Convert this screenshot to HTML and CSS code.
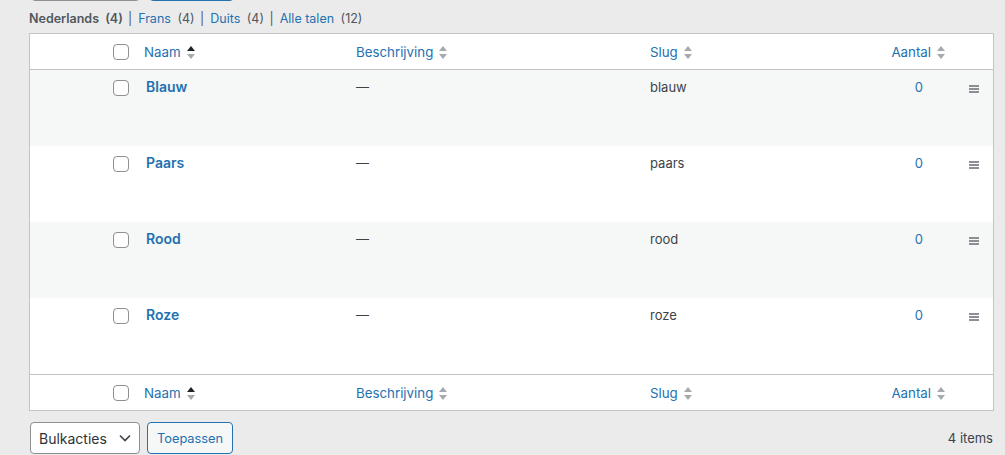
FILE: index.html
```html
<!DOCTYPE html>
<html lang="nl">
<head>
    <meta charset="UTF-8">
    <title>Talen</title>
    <link rel="stylesheet" href="styles.css">
</head>
<body>
    <div class="toptools">
        <span class="btn-ghost"></span>
        <span class="btn-ghost primary"></span>
    </div>

    <ul class="subsubsub">
        <li class="current">Nederlands <span class="count">(4)</span> <span class="sep">|</span></li>
        <li><a href="#">Frans</a> <span class="count">(4)</span> <span class="sep">|</span></li>
        <li><a href="#">Duits</a> <span class="count">(4)</span> <span class="sep">|</span></li>
        <li><a href="#">Alle talen</a> <span class="count">(12)</span></li>
    </ul>

    <div class="terms">
        <div class="row head">
            <div></div>
            <div><span class="check"></span></div>
            <div><a href="#">Naam</a><span class="sort up"><svg width="8" height="13" viewBox="0 0 8 13"><path d="M0 5 4 0 8 5z" fill="#1d2327"/><path d="M0 8 4 13 8 8z" fill="#a7aaad"/></svg></span></div>
            <div><a href="#">Beschrijving</a><span class="sort"><svg width="8" height="13" viewBox="0 0 8 13"><path d="M0 5 4 0 8 5z" fill="#a7aaad"/><path d="M0 8 4 13 8 8z" fill="#a7aaad"/></svg></span></div>
            <div><a href="#">Slug</a><span class="sort"><svg width="8" height="13" viewBox="0 0 8 13"><path d="M0 5 4 0 8 5z" fill="#a7aaad"/><path d="M0 8 4 13 8 8z" fill="#a7aaad"/></svg></span></div>
            <div class="num"><a href="#">Aantal</a><span class="sort"><svg width="8" height="13" viewBox="0 0 8 13"><path d="M0 5 4 0 8 5z" fill="#a7aaad"/><path d="M0 8 4 13 8 8z" fill="#a7aaad"/></svg></span></div>
            <div></div>
        </div>

        <div class="row item alt">
            <div></div>
            <div><span class="check"></span></div>
            <div><a class="name" href="#">Blauw</a></div>
            <div>—</div>
            <div>blauw</div>
            <div class="num"><a href="#">0</a></div>
            <div><span class="handle"></span></div>
        </div>
        <div class="row item">
            <div></div>
            <div><span class="check"></span></div>
            <div><a class="name" href="#">Paars</a></div>
            <div>—</div>
            <div>paars</div>
            <div class="num"><a href="#">0</a></div>
            <div><span class="handle"></span></div>
        </div>
        <div class="row item alt">
            <div></div>
            <div><span class="check"></span></div>
            <div><a class="name" href="#">Rood</a></div>
            <div>—</div>
            <div>rood</div>
            <div class="num"><a href="#">0</a></div>
            <div><span class="handle"></span></div>
        </div>
        <div class="row item">
            <div></div>
            <div><span class="check"></span></div>
            <div><a class="name" href="#">Roze</a></div>
            <div>—</div>
            <div>roze</div>
            <div class="num"><a href="#">0</a></div>
            <div><span class="handle"></span></div>
        </div>

        <div class="row head foot">
            <div></div>
            <div><span class="check"></span></div>
            <div><a href="#">Naam</a><span class="sort up"><svg width="8" height="13" viewBox="0 0 8 13"><path d="M0 5 4 0 8 5z" fill="#1d2327"/><path d="M0 8 4 13 8 8z" fill="#a7aaad"/></svg></span></div>
            <div><a href="#">Beschrijving</a><span class="sort"><svg width="8" height="13" viewBox="0 0 8 13"><path d="M0 5 4 0 8 5z" fill="#a7aaad"/><path d="M0 8 4 13 8 8z" fill="#a7aaad"/></svg></span></div>
            <div><a href="#">Slug</a><span class="sort"><svg width="8" height="13" viewBox="0 0 8 13"><path d="M0 5 4 0 8 5z" fill="#a7aaad"/><path d="M0 8 4 13 8 8z" fill="#a7aaad"/></svg></span></div>
            <div class="num"><a href="#">Aantal</a><span class="sort"><svg width="8" height="13" viewBox="0 0 8 13"><path d="M0 5 4 0 8 5z" fill="#a7aaad"/><path d="M0 8 4 13 8 8z" fill="#a7aaad"/></svg></span></div>
            <div></div>
        </div>
    </div>

    <div class="tablenav">
        <div class="bulk">
            <div class="select">Bulkacties
                <svg width="12" height="8" viewBox="0 0 12 8"><path d="M1 1.5 6 6.5 11 1.5" fill="none" stroke="#3c434a" stroke-width="1.6"/></svg>
            </div>
            <button class="apply">Toepassen</button>
        </div>
        <span class="items">4 items</span>
    </div>
</body>
</html>
```

FILE: styles.css
```css
body {
    margin: 0;
    background: #ebebeb;
    font-family: Inter, "Liberation Sans", Arial, sans-serif;
    font-size: 13px;
    color: #3c434a;
    overflow: hidden;
}

a {
    color: #2271b1;
    text-decoration: none;
}

.toptools {
    display: flex;
    gap: 9px;
    margin: -29px 0 0 31px;
    height: 30px;
}

.btn-ghost {
    width: 109px;
    height: 30px;
    border: 1px solid #8c8f94;
    border-radius: 4px;
    box-sizing: border-box;
}

.btn-ghost.primary {
    width: 85px;
    border-color: #2271b1;
}

.subsubsub {
    list-style: none;
    margin: 10px 0 0 29px;
    padding: 0;
    display: flex;
    gap: 6px;
    color: #50575e;
    line-height: 15px;
    font-size: 12.5px;
}

.subsubsub .current {
    font-weight: 600;
}

.subsubsub .count {
    margin-left: 3px;
    font-weight: normal;
}

.subsubsub .current .count {
    font-weight: 600;
}

.subsubsub .sep {
    margin-left: 2px;
    font-weight: normal;
    color: #50575e;
}

.terms {
    margin: 7px 11px 0 29px;
    border: 1px solid #c3c4c7;
    background: #fff;
}

.row {
    display: grid;
    grid-template-columns: 83px 31px 212px 294px 205px 100px 38px;
}

.row.head {
    height: 35px;
    align-items: center;
    border-bottom: 1px solid #c3c4c7;
}

.row.head.foot {
    border-bottom: none;
    border-top: 1px solid #c3c4c7;
}

.row.head a {
    font-size: 13.3px;
}

.row.head .num {
    padding-right: 10px;
}

.row.item {
    height: 76px;
    padding-top: 9px;
    box-sizing: border-box;
    line-height: 16px;
}

.row.item.alt {
    background: #f6f7f7;
}

.row.item .num {
    padding-right: 32px;
}

.num {
    text-align: right;
}

.check {
    display: block;
    width: 16px;
    height: 16px;
    border: 1px solid #8c8f94;
    border-radius: 4px;
    box-sizing: border-box;
    background: #fff;
}

.row.item .check {
    margin-top: 1px;
}

.sort {
    display: inline-block;
    margin-left: 6px;
    vertical-align: -2px;
}

.sort svg {
    display: block;
}

.name {
    font-weight: 600;
    font-size: 14px;
    margin-left: 2px;
}

.handle {
    display: block;
    width: 10px;
    height: 2px;
    margin: 6px 0 0 14px;
    background: #8c8f94;
    box-shadow: 0 3px 0 #8c8f94, 0 6px 0 #8c8f94;
}

.tablenav {
    display: flex;
    justify-content: space-between;
    align-items: center;
    margin: 11px 12px 0 30px;
}

.bulk {
    display: flex;
    gap: 7px;
}

.select {
    width: 110px;
    height: 32px;
    box-sizing: border-box;
    border: 1px solid #8c8f94;
    border-radius: 4px;
    background: #fff;
    color: #2c3338;
    font-size: 14px;
    display: flex;
    align-items: center;
    justify-content: space-between;
    padding: 0 8px 0 8px;
}

.apply {
    height: 32px;
    padding: 0 9px;
    border: 1px solid #2271b1;
    border-radius: 4px;
    background: #f6f7f7;
    color: #2271b1;
    font-family: inherit;
    font-size: 12.8px;
}

.items {
    color: #3c434a;
}
```
